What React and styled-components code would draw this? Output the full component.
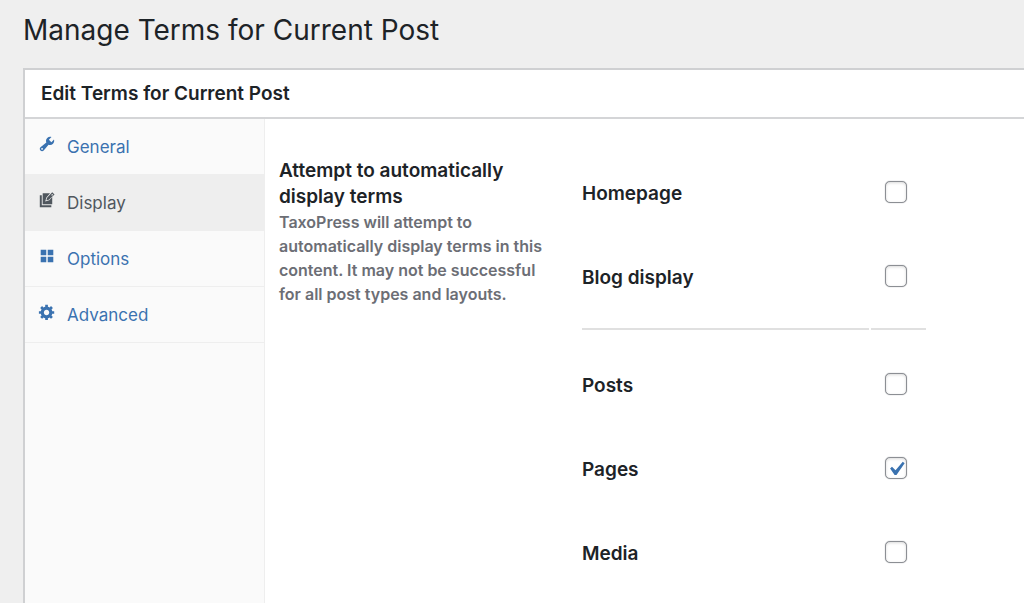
import React, { useState } from 'react';
import styled, { createGlobalStyle, css } from 'styled-components';

const GlobalStyle = createGlobalStyle`
	* {
		box-sizing: border-box;
	}
	body {
		margin: 0;
		background-color: #efefef;
		color: #1d2327;
		font-family: Inter, 'Liberation Sans', sans-serif;
		font-size: 19px;
		line-height: 26px;
	}
`;

const Page = styled.main`
	display: flex;
	flex-direction: column;
	min-height: 100vh;
	padding: 10px 0 0 23px;
`;

const PageTitle = styled.h1`
	margin: 0 0 18px;
	font-size: 28px;
	font-weight: 400;
	line-height: 40px;
`;

const Panel = styled.section`
	display: flex;
	flex-direction: column;
	flex: 1;
	border: 2px solid #cfd0d2;
	border-width: 2px 0 0 2px;
	background-color: #fff;
`;

const PanelTitle = styled.h2`
	margin: 0;
	padding: 11px 16px 10px;
	border-bottom: 2px solid #d4d5d7;
	font-size: 19px;
	font-weight: 600;
	line-height: 26px;
`;

const PanelBody = styled.div`
	display: flex;
	flex: 1;
`;

const TabNav = styled.nav`
	flex: 0 0 240px;
	border-right: 1px solid #eee;
	background-color: #fafafa;
	font-size: 17px;
`;

const TabLink = styled.a`
	display: flex;
	align-items: center;
	gap: 11px;
	height: 56px;
	padding: 0 13px;
	border-bottom: 1px solid #eee;
	color: #3a72b0;
	text-decoration: none;
	${({ $active }) =>
		$active &&
		css`
			background-color: #eee;
			color: #50575e;
		`}
`;

const TabIcon = styled.svg`
	width: 18px;
	height: 18px;
	margin-bottom: 5px;
	fill: currentColor;
`;

const Settings = styled.div`
	display: grid;
	grid-template-columns: 272px minmax(0, 344px);
	gap: 31px;
	flex: 1;
	align-items: start;
	padding: 33px 14px 0;
`;

const SettingInfo = styled.div`
	padding-top: 6px;
`;

const SettingTitle = styled.h3`
	margin: 0;
	font-size: 19px;
	font-weight: 600;
	line-height: 26px;
`;

const SettingText = styled.p`
	margin: 0;
	color: #6c6e75;
	font-size: 16px;
	font-weight: 600;
	line-height: 24px;
`;

const OptionRow = styled.div`
	display: grid;
	grid-template-columns: 1fr 55px;
	gap: 2px;
	align-items: center;
	height: 84px;
`;

const OptionLabel = styled.label`
	font-weight: 600;
`;

const Divider = styled.div`
	display: grid;
	grid-template-columns: 1fr 55px;
	gap: 2px;
	margin: 8px 0 14px;
`;

const DividerLine = styled.span`
	height: 2px;
	background-color: #e0e0e0;
`;

const CheckWrap = styled.span`
	position: relative;
	width: 22px;
	height: 22px;
	margin: 0 0 4px 14px;
`;

const CheckInput = styled.input`
	display: block;
	appearance: none;
	width: 22px;
	height: 22px;
	margin: 0;
	border: 1px solid #8c8f94;
	border-radius: 5px;
	background-color: #fff;
	box-shadow:
		0 0 1px #8c8f94,
		inset 0 1px 3px rgba(0, 0, 0, 0.15);
`;

const CheckMark = styled.svg`
	position: absolute;
	top: -2px;
	left: -3px;
	width: 28px;
	height: 28px;
	fill: #3a72b0;
	pointer-events: none;
`;

const tabs = [
	{
		name: 'General',
		icon: (
			<path d="M16.68 9.77c-1.34 1.34-3.3 1.67-4.95.99l-5.41 6.52c-.99.99-2.59.99-3.58 0s-.99-2.59 0-3.57l6.52-5.42c-.68-1.65-.35-3.61.99-4.95 1.28-1.28 3.12-1.62 4.72-1.06l-2.89 2.89 2.82 2.82 2.86-2.87c.53 1.58.18 3.39-1.08 4.65zM3.81 16.21c.4.39 1.04.39 1.43 0 .4-.4.4-1.04 0-1.43-.39-.4-1.03-.4-1.43 0-.39.39-.39 1.03 0 1.43z" />
		),
	},
	{
		name: 'Display',
		icon: (
			<>
				<path d="M2 4.6h2.2v11.2h10.6V18H2z" />
				<path d="M5.2 2.6h8.2L9.3 7.1 8 11.6l4.5-1.3 3.3-3.5v8H5.2z" />
				<path d="M15.8 1.4l2.6 2.4-6.4 5.8-2.7.7.8-2.7zM15.8 3.2l-1.2 1.2 1 1 1.3-1.2z" fillRule="evenodd" />
			</>
		),
	},
	{
		name: 'Options',
		icon: <path d="M3 3h6.2v6.2H3zm7.8 0H17v6.2h-6.2zM3 10.8h6.2V17H3zm7.8 0H17V17h-6.2z" />,
	},
	{
		name: 'Advanced',
		icon: (
			<path d="M18 12h-2.18c-.17.7-.44 1.35-.81 1.93l1.54 1.54-2.1 2.1-1.54-1.54c-.58.36-1.23.63-1.91.79V19H8v-2.18c-.68-.16-1.33-.43-1.91-.79l-1.54 1.54-2.12-2.12 1.54-1.54c-.36-.58-.63-1.23-.79-1.91H1V9.03h2.17c.16-.7.44-1.35.8-1.94L2.43 5.55l2.1-2.1 1.54 1.54c.58-.37 1.24-.64 1.93-.81V2h3v2.18c.68.16 1.33.43 1.91.79l1.54-1.54 2.12 2.12-1.54 1.54c.36.59.64 1.24.8 1.94H18V12zm-8.5 1.5c1.66 0 3-1.34 3-3s-1.34-3-3-3-3 1.34-3 3 1.34 3 3 3z" />
		),
	},
];

function Option({ id, label, defaultChecked = false }) {
	const [checked, setChecked] = useState(defaultChecked);

	return (
		<OptionRow>
			<OptionLabel htmlFor={id}>{label}</OptionLabel>
			<CheckWrap>
				<CheckInput
					type="checkbox"
					id={id}
					checked={checked}
					onChange={(e) => setChecked(e.target.checked)}
				/>
				{checked && (
					<CheckMark viewBox="0 0 20 20">
						<path d="M14.83 4.89l1.34.94-5.81 8.38H9.02L5.78 9.67l1.34-1.25 2.57 2.4z" />
					</CheckMark>
				)}
			</CheckWrap>
		</OptionRow>
	);
}

function App() {
	const [activeTab, setActiveTab] = useState('Display');

	return (
		<>
			<GlobalStyle />
			<Page>
				<PageTitle>Manage Terms for Current Post</PageTitle>
				<Panel>
					<PanelTitle>Edit Terms for Current Post</PanelTitle>
					<PanelBody>
						<TabNav>
							{tabs.map(({ name, icon }) => (
								<TabLink
									key={name}
									href={`#${name.toLowerCase()}`}
									$active={name === activeTab}
									onClick={() => setActiveTab(name)}
								>
									<TabIcon viewBox="0 0 20 20">{icon}</TabIcon>
									{name}
								</TabLink>
							))}
						</TabNav>

						<Settings>
							<SettingInfo>
								<SettingTitle>Attempt to automatically display terms</SettingTitle>
								<SettingText>
									TaxoPress will attempt to automatically display terms in this content. It may
									not be successful for all post types and layouts.
								</SettingText>
							</SettingInfo>

							<div>
								<Option id="homepage" label="Homepage" />
								<Option id="blog" label="Blog display" />
								<Divider>
									<DividerLine />
									<DividerLine />
								</Divider>
								<Option id="posts" label="Posts" />
								<Option id="pages" label="Pages" defaultChecked />
								<Option id="media" label="Media" />
							</div>
						</Settings>
					</PanelBody>
				</Panel>
			</Page>
		</>
	);
}

export default App;
